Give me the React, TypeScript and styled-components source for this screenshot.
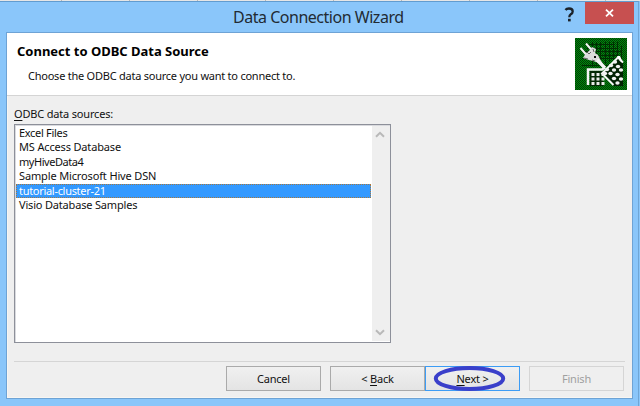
import React from "react";
import styled, { createGlobalStyle } from "styled-components";

const Global = createGlobalStyle`
  * { box-sizing: border-box; }
  html, body { margin: 0; padding: 0; overflow: hidden; }
  body { font-family: "Noto Sans", "Open Sans", sans-serif; font-size: 11px; color: #111; }
`;

const Screen = styled.div`
  width: 640px;
  height: 406px;
  display: flex;
  flex-direction: column;
  background: #8ac6fa;
`;

const SheetEdge = styled.div`
  height: 1px;
  background: repeating-linear-gradient(90deg, #e6e6e6 0 67px, #b8b8b8 67px 68px);
  background-position-x: -6px;
`;

const Window = styled.div`
  flex: 1;
  display: flex;
  flex-direction: column;
  border-top: 1px solid #629ccf;
  border-right: 1px solid #6fa6d6;
  margin-right: 1px;
  padding: 0 5px 7px 6px;
`;

const TitleBar = styled.header`
  height: 30px;
  flex: none;
  display: grid;
  grid-template-columns: 1fr 29px 49px;
  margin-right: -1px;
  align-items: start;
`;

const Title = styled.h1`
  margin: 0;
  padding-left: 227px;
  font-size: 16px;
  line-height: 30px;
  font-weight: 400;
  letter-spacing: -0.48px;
  white-space: nowrap;
  color: #222b33;
`;

const HelpButton = styled.button`
  all: unset;
  height: 23px;
  padding-left: 7px;
  svg { display: block; }
`;

const CloseButton = styled.button`
  all: unset;
  height: 22px;
  background: #c75050;
  display: flex;
  align-items: center;
  justify-content: center;
`;

const Client = styled.main`
  flex: 1;
  display: flex;
  flex-direction: column;
  background: #efefef;
  border: 1px solid #6ea3d5;
  box-shadow: inset 1px -1px #f8f6f2;
`;

const Banner = styled.section`
  height: 63px;
  flex: none;
  display: flex;
  justify-content: space-between;
  background: #fff;
  border-bottom: 1px solid #d4d4d4;
  padding: 5px 5px 0 10px;
`;

const Heading = styled.h2`
  margin: 4px 0 0;
  font-size: 13px;
  line-height: 18px;
  font-weight: 700;
  letter-spacing: -0.01px;
  color: #000;
`;

const Subheading = styled.p`
  margin: 8px 0 0 11px;
  line-height: 16px;
  letter-spacing: -0.24px;
`;

const Body = styled.section`
  flex: 1;
  display: flex;
  flex-direction: column;
  padding: 10px 7px 0;
`;

const Label = styled.label`
  height: 18px;
  line-height: 16px;
  letter-spacing: -0.18px;
`;

const Key = styled.span`
  text-decoration: underline;
  text-underline-offset: 2px;
  text-decoration-thickness: 1px;
  text-decoration-skip-ink: none;
`;

const ListBox = styled.div`
  width: 377px;
  height: 219px;
  flex: none;
  display: flex;
  background: #fff;
  border: 1px solid #8d909a;
  box-shadow: inset 1px 1px #d9dade;
`;

const Items = styled.ul`
  flex: 1;
  margin: 0;
  padding: 1px 1px 0 1px;
  list-style: none;
`;

const Item = styled.li<{ $selected?: boolean; $spacing: number }>`
  height: 14.4px;
  line-height: 14px;
  padding-left: 3px;
  letter-spacing: ${(p) => p.$spacing}px;
  white-space: nowrap;
  color: ${(p) => (p.$selected ? "#fff" : "#111")};
  background: ${(p) => (p.$selected ? "#3399ff" : "transparent")};
  outline: ${(p) => (p.$selected ? "1px dotted #a5773f" : "none")};
  outline-offset: -1px;
`;

const ScrollBar = styled.div`
  width: 18px;
  margin: 1px 0;
  display: flex;
  flex-direction: column;
  justify-content: space-between;
  align-items: center;
  padding: 5px 2px 5px 0;
  background: #efefef;
`;

const Footer = styled.footer`
  margin-top: 18px;
  width: 611px;
  border-top: 1px solid #d5d5d5;
  padding: 4px 1px 0 0;
  display: flex;
  justify-content: flex-end;
`;

const Button = styled.button<{ $kind?: "default" | "disabled"; $gap?: number }>`
  position: relative;
  width: 95px;
  height: 25px;
  padding: 0 0 1px;
  margin-left: ${(p) => p.$gap ?? 9}px;
  font: inherit;
  letter-spacing: -0.2px;
  color: ${(p) => (p.$kind === "disabled" ? "#a0a0a0" : "#111")};
  background: ${(p) => (p.$kind === "disabled" ? "#efefef" : "linear-gradient(#f0f0f0, #e4e4e4)")};
  border: 1px solid ${(p) => (p.$kind === "disabled" ? "#d5d5d5" : p.$kind === "default" ? "#3c9cf5" : "#aaa")};
`;

const Ring = styled.svg`
  position: absolute;
  left: 6px;
  top: -2px;
  overflow: visible;
  pointer-events: none;
`;

const Chevron = ({ down = false }: { down?: boolean }) => (
  <svg width="10" height="7" viewBox="0 0 10 7">
    <path d={down ? "M1 1.2 L5 5.2 L9 1.2" : "M1 5.8 L5 1.8 L9 5.8"} fill="none" stroke="#b9b9b9" strokeWidth="2" />
  </svg>
);

const leftDots = [35, 39.5, 44].flatMap((y) => [16.5, 21.5, 26.5].map((x) => [x, y]));
const rightDots = [
  [40, 24], [36, 27.5], [43, 28.5], [32, 31.5], [39, 32], [46, 32], [35.5, 35.5],
  [42.5, 36.5], [39, 40.5], [46, 41], [42.5, 45], [30, 35.5],
];

const DataSourceIcon = () => (
  <svg width="52" height="52" viewBox="0 0 52 52">
    <defs>
      <pattern id="weave" width="4" height="4" patternUnits="userSpaceOnUse">
        <rect width="4" height="4" fill="#003d02" />
        <path d="M0 0h1v1H0z M2 0h1v1H2z M1 1h1v1H1z M3 1h1v1H3z M0 2h1v1H0z M2 2h1v1H2z M1 3h1v1H1z M3 3h1v1H3z" fill="#00860f" />
      </pattern>
    </defs>
    <rect width="52" height="52" fill="url(#weave)" />
    <path d="M11 6h29v1H11z M7 13h39v1H7z M7 20h39v1H7z M7 27h39v1H7z M17 4h1v25h-1z M25 4h1v25h-1z M34 4h1v20h-1z M42 4h1v17h-1z M21 4h1v22h-1z M30 4h1v22h-1z M38 4h1v18h-1z M46 8h1v18h-1z M12 10h30v1H12z M12 17h30v1H12z" fill="#001800" opacity=".7" />
    <path d="M15 33H28V48H15z" fill="#022a04" />
    <path d="M28 34L43 20L48 24V48H39z" fill="#022204" />
    <path d="M5.5 10l6 7 M11 5.5l6 7" stroke="#f4f4f4" strokeWidth="2" />
    <path d="M8 20l3-5 3-2 3-4 4 2-1 4 3 2 2 4 3 5-7-2-3-1-4-1z" fill="#dcdcdc" />
    <path d="M12 14l2 2 2-2 M18 11l1 3 M9 20l4 1 M17 22l3 1" fill="none" stroke="#666" />
    <path d="M19 18h2v2h-2z" fill="#101010" />
    <path d="M22 22l8 8" stroke="#f6f6f6" strokeWidth="3.4" />
    <path d="M13 47V31.5H27l3-2" fill="none" stroke="#f5f5f5" strokeWidth="2.5" />
    <path d="M38.5 47L27 35.5 43 19.5l5 5" fill="none" stroke="#f5f5f5" strokeWidth="2" />
    <path d="M42 18h3l3 7-3-2z" fill="#fff" />
    {leftDots.map(([x, y]) => (
      <rect key={`${x}-${y}`} x={x} y={y} width="3" height="3" fill="#e9ece9" />
    ))}
    {rightDots.map(([x, y]) => (
      <ellipse key={`${x}-${y}`} cx={x} cy={y} rx="2.2" ry="1.8" fill="#f2f2f2" />
    ))}
  </svg>
);

const sources = [
  { name: "Excel Files", spacing: -0.3 },
  { name: "MS Access Database", spacing: -0.16 },
  { name: "myHiveData4", spacing: -0.45 },
  { name: "Sample Microsoft Hive DSN", spacing: -0.14 },
  { name: "tutorial-cluster-21", spacing: -0.3, selected: true },
  { name: "Visio Database Samples", spacing: -0.18 },
];

export default function App() {
  return (
    <Screen>
      <Global />
      <SheetEdge />
      <Window>
        <TitleBar>
          <Title>Data Connection Wizard</Title>
          <HelpButton aria-label="Help">
            <svg width="14" height="20" viewBox="0 0 14 20">
              <path d="M2.5 6Q3.5 4.5 6 4.5Q9.7 4.5 9.7 7.4Q9.7 9 7.8 10.2Q6.3 11.2 6.3 13.2" fill="none" stroke="#1b2229" strokeWidth="2.3" />
              <rect x="5" y="14.8" width="2.7" height="2.6" fill="#1b2229" />
            </svg>
          </HelpButton>
          <CloseButton aria-label="Close">
            <svg width="9" height="8" viewBox="0 0 9 8">
              <path d="M1 .7L8 7.3M8 .7L1 7.3" stroke="#fff" strokeWidth="1.8" />
            </svg>
          </CloseButton>
        </TitleBar>
        <Client>
          <Banner>
            <div>
              <Heading>Connect to ODBC Data Source</Heading>
              <Subheading>Choose the ODBC data source you want to connect to.</Subheading>
            </div>
            <DataSourceIcon />
          </Banner>
          <Body>
            <Label><Key>O</Key>DBC data sources:</Label>
            <ListBox>
              <Items>
                {sources.map((s) => (
                  <Item key={s.name} $selected={s.selected} $spacing={s.spacing}>{s.name}</Item>
                ))}
              </Items>
              <ScrollBar>
                <Chevron />
                <Chevron down />
              </ScrollBar>
            </ListBox>
            <Footer>
              <Button>Cancel</Button>
              <Button>&lt; <Key>B</Key>ack</Button>
              <Button $kind="default" $gap={0}>
                <Key>N</Key>ext &gt;
                <Ring width="75" height="27" viewBox="0 0 75 27">
                  <ellipse cx="37.5" cy="13.5" rx="33.7" ry="10.5" fill="none" stroke="#3a3fca" strokeWidth="4" />
                </Ring>
              </Button>
              <Button $kind="disabled" disabled>Finish</Button>
            </Footer>
          </Body>
        </Client>
      </Window>
    </Screen>
  );
}
